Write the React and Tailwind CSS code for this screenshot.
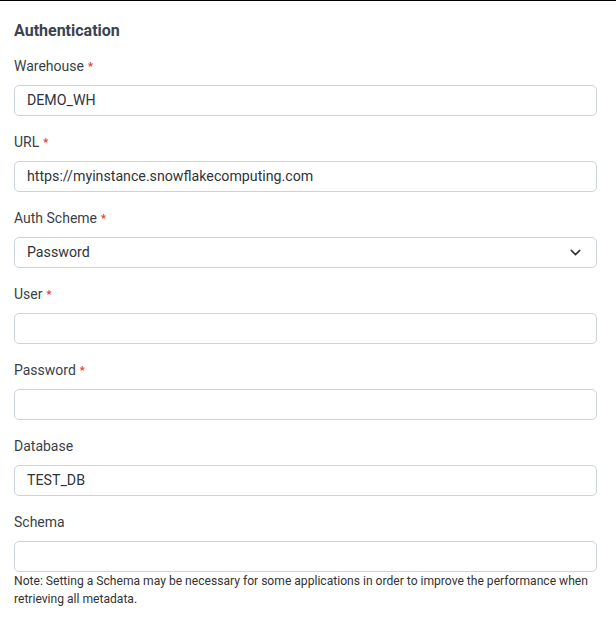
import { ChevronDown } from 'lucide-react';

const fields = [
  { label: 'Warehouse', required: true, value: 'DEMO_WH' },
  { label: 'URL', required: true, value: 'https://myinstance.snowflakecomputing.com' },
  { label: 'Auth Scheme', required: true, value: 'Password', select: true },
  { label: 'User', required: true, value: '' },
  { label: 'Password', required: true, value: '' },
  { label: 'Database', required: false, value: 'TEST_DB' },
  { label: 'Schema', required: false, value: '' },
];

function Field({ label, required, value, select }) {
  return (
    <div className="flex flex-col">
      <div className="flex items-center h-5 text-sm text-[#3a3f47]">
        {label}
        {required && <span className="ml-1 text-[11px] font-bold text-[#e53935] leading-none">*</span>}
      </div>
      <div className="mt-[9px] h-[31px] border border-[#cdd3da] rounded-[5px] bg-white flex items-center justify-between pl-3 pr-3 text-[14.2px] text-[#2f343b]">
        <span>{value}</span>
        {select && <ChevronDown size={17} strokeWidth={2.2} className="text-[#333]" />}
      </div>
    </div>
  );
}

export default function App() {
  return (
    <div className="bg-white border-t border-black w-[616px] h-[623px] pl-[14px] pr-[19px] font-['Roboto',sans-serif]">
      <h2 className="mt-5 h-5 flex items-center text-base font-bold text-[#3b4350]">Authentication</h2>
      <div className="mt-[15px] flex flex-col gap-4">
        {fields.map((f) => (
          <Field key={f.label} {...f} />
        ))}
      </div>
      <p className="text-[12.1px] leading-[18px] text-[#333]">
        Note: Setting a Schema may be necessary for some applications in order to improve the performance when retrieving all metadata.
      </p>
    </div>
  );
}
